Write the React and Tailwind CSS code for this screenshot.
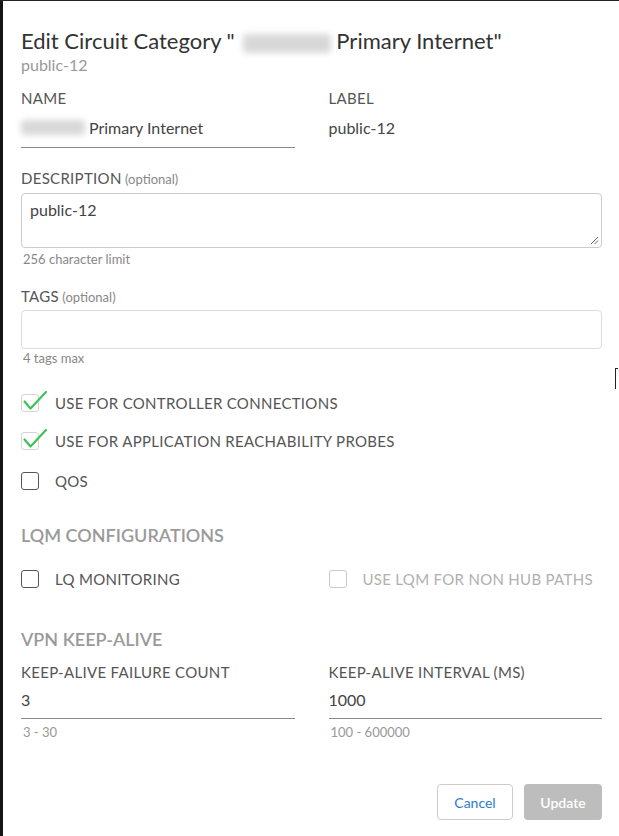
import React from 'react';

const Check = ({ checked, disabled }) => {
  return (
    <div className="relative w-[18px] h-[18px] shrink-0">
      <div
        className={
          'w-[18px] h-[18px] rounded-[3px] border bg-white ' +
          (checked ? 'border-[#d4d4d4]' : disabled ? 'border-[#c8c8c8]' : 'border-[#555] border-[1.5px]')
        }
      />
      {checked && (
        <svg className="absolute left-[1px] top-[-4px]" width="26" height="22" viewBox="0 0 26 22">
          <path d="M2.5 11.5 L8.5 18.5 L24 2" fill="none" stroke="#3cc35a" strokeWidth="2.2" strokeLinecap="round" strokeLinejoin="round" />
        </svg>
      )}
    </div>
  );
};

const CheckRow = ({ label, checked, disabled }) => (
  <div className="flex items-center h-[20px]">
    <Check checked={checked} disabled={disabled} />
    <span className={'ml-[16px] text-[15px] tracking-[0.3px] ' + (disabled ? 'text-[#b0b0b0]' : 'text-[#555]')}>{label}</span>
  </div>
);

const Label = ({ children, optional }) => (
  <div className="text-[15px] leading-[20px] text-[#555] tracking-[0.3px]">
    {children}
    {optional && <span className="text-[13px] text-[#888] tracking-normal"> (optional)</span>}
  </div>
);

const Blur = ({ w }) => (
  <span className={'inline-block align-middle h-[0.9em] rounded-sm bg-[#d8d8d8] blur-[3px] ' + w} />
);

export default function App() {
  return (
    <div className="flex w-full h-[836px] bg-white border-t border-[#222]" style={{ fontFamily: 'Lato, "Open Sans", sans-serif' }}>
      <div className="w-[3px] bg-[#151515] shrink-0" />
      <div className="relative flex-1 pl-[18px] pr-[14px] pt-[26px]">
        <h1 className="text-[22px] leading-[28px] text-[#333]">
          Edit Circuit Category "<Blur w="w-[88px] ml-[8px]" /> Primary Internet"
        </h1>
        <div className="text-[16px] leading-[20px] text-[#999]">public-12</div>

        <div className="grid grid-cols-2 gap-x-[34px] mt-[13px] w-[581px]">
          <div>
            <Label>NAME</Label>
            <div className="h-[40px] flex items-center border-b border-[#888] text-[16px] text-[#444] w-[274px]">
              <Blur w="w-[64px] mr-[4px]" />Primary Internet
            </div>
          </div>
          <div>
            <Label>LABEL</Label>
            <div className="h-[40px] flex items-center text-[16px] text-[#444]">public-12</div>
          </div>
        </div>

        <div className="mt-[20px] w-[581px]">
          <Label optional>DESCRIPTION</Label>
          <div className="relative mt-[4px] h-[55px] border border-[#ccc] rounded-[4px] px-[8px] pt-[6px] text-[16px] leading-[20px] text-[#444]">
            public-12
            <svg className="absolute right-[2px] bottom-[2px]" width="10" height="10" viewBox="0 0 10 10">
              <path d="M9 2 L2 9 M9 5.5 L5.5 9" stroke="#666" strokeWidth="1" />
            </svg>
          </div>
          <div className="mt-[3px] text-[13px] leading-[16px] text-[#888] pl-[2px]">256 character limit</div>
        </div>

        <div className="mt-[19px] w-[581px]">
          <Label optional>TAGS</Label>
          <div className="mt-[3px] h-[39px] border border-[#ddd] rounded-[4px]" />
          <div className="mt-[1px] text-[13px] leading-[16px] text-[#888] pl-[2px]">4 tags max</div>
        </div>

        <div className="mt-[27px] flex flex-col gap-[18px]">
          <CheckRow label="USE FOR CONTROLLER CONNECTIONS" checked />
          <CheckRow label="USE FOR APPLICATION REACHABILITY PROBES" checked />
          <div className="mt-[2px]"><CheckRow label="QOS" /></div>
        </div>

        <div className="mt-[32px] text-[18px] leading-[24px] font-semibold text-[#9a9a9a]">LQM CONFIGURATIONS</div>
        <div className="mt-[22px] grid grid-cols-2 gap-x-[34px] w-[581px]">
          <CheckRow label="LQ MONITORING" />
          <CheckRow label="USE LQM FOR NON HUB PATHS" disabled />
        </div>

        <div className="mt-[38px] text-[18px] leading-[24px] font-semibold text-[#9a9a9a]">VPN KEEP-ALIVE</div>
        <div className="mt-[11px] grid grid-cols-2 gap-x-[34px] w-[581px]">
          <div>
            <Label>KEEP-ALIVE FAILURE COUNT</Label>
            <div className="h-[37px] flex items-center border-b border-[#888] text-[16px] text-[#444] w-[274px]">3</div>
            <div className="mt-[5px] text-[13px] leading-[16px] text-[#999] pl-[2px]">3 - 30</div>
          </div>
          <div>
            <Label>KEEP-ALIVE INTERVAL (MS)</Label>
            <div className="h-[37px] flex items-center border-b border-[#888] text-[16px] text-[#444]">1000</div>
            <div className="mt-[5px] text-[13px] leading-[16px] text-[#999] pl-[2px]">100 - 600000</div>
          </div>
        </div>

        <div className="mt-[44px] flex justify-end gap-[11px] w-[581px]">
          <button className="w-[76px] h-[36px] border border-[#ccc] rounded-[4px] bg-white text-[14px] text-[#2a7bd4]">Cancel</button>
          <button className="w-[78px] h-[36px] rounded-[4px] bg-[#bdbdbd] text-[14px] text-white font-semibold">Update</button>
        </div>

        <div className="absolute right-[1px] top-[367px] w-[3px] h-[21px] border-l border-t border-[#222]" />
      </div>
    </div>
  );
}
